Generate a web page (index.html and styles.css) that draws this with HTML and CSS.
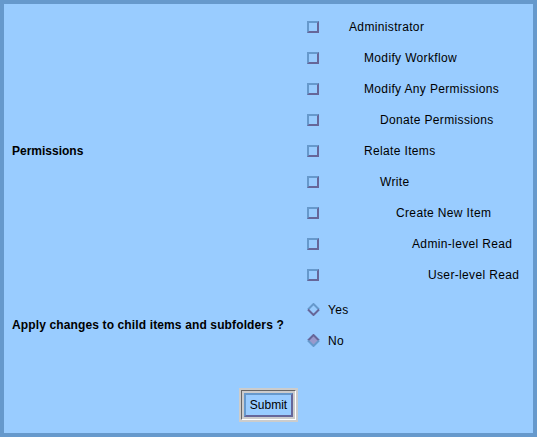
FILE: index.html
```html
<!DOCTYPE html>
<html>
<head>
<meta charset="utf-8">
<link rel="stylesheet" href="styles.css">
</head>
<body>
<div class="frame">
  <form class="form">
    <div class="section">
      <div class="label">Permissions</div>
      <div class="controls">
        <label class="row"><span class="check"></span><span class="text l0">Administrator</span></label>
        <label class="row"><span class="check"></span><span class="text l1">Modify Workflow</span></label>
        <label class="row"><span class="check"></span><span class="text l1">Modify Any Permissions</span></label>
        <label class="row"><span class="check"></span><span class="text l2">Donate Permissions</span></label>
        <label class="row"><span class="check"></span><span class="text l1">Relate Items</span></label>
        <label class="row"><span class="check"></span><span class="text l2">Write</span></label>
        <label class="row"><span class="check"></span><span class="text l3">Create New Item</span></label>
        <label class="row"><span class="check"></span><span class="text l4">Admin-level Read</span></label>
        <label class="row"><span class="check"></span><span class="text l5">User-level Read</span></label>
      </div>
    </div>
    <div class="section second">
      <div class="label apply">Apply changes to child items and subfolders ?</div>
      <div class="controls">
        <label class="row"><svg class="radio" width="13" height="13" viewBox="0 0 13 13"><path d="M1 6.5 L6.5 1 L12 6.5" stroke="#6699CC" stroke-width="2" fill="none"/><path d="M1 6.5 L6.5 12 L12 6.5" stroke="#666699" stroke-width="2" fill="none"/></svg><span class="rtext">Yes</span></label>
        <label class="row"><svg class="radio" width="13" height="13" viewBox="0 0 13 13"><path d="M6.5 1 L12 6.5 L6.5 12 L1 6.5 Z" fill="#9999CC"/><path d="M1 6.5 L6.5 1 L12 6.5" stroke="#666699" stroke-width="2" fill="none"/><path d="M1 6.5 L6.5 12 L12 6.5" stroke="#6699CC" stroke-width="2" fill="none"/></svg><span class="rtext">No</span></label>
      </div>
    </div>
    <div class="actions">
      <div class="btnwrap"><div class="etch"><button type="button" class="btn">Submit</button></div></div>
    </div>
  </form>
</div>
</body>
</html>
```
FILE: styles.css
```css
html, body {
  margin: 0;
  padding: 0;
}
body {
  font-family: "Liberation Sans", Arial, sans-serif;
  font-size: 12px;
  color: #000;
}
.frame {
  width: 537px;
  height: 437px;
  box-sizing: border-box;
  border: 4px solid #6699CC;
  background: #99CCFF;
}
.form {
  padding: 7px 0 0 8px;
  margin: 0;
}
.section {
  display: grid;
  grid-template-columns: 295px 1fr;
  align-items: center;
}
.second {
  margin-top: 4px;
}
.label {
  font-weight: bold;
}
.apply {
  letter-spacing: 0.13px;
}
.controls {
  display: flex;
  flex-direction: column;
}
.row {
  height: 31px;
  display: flex;
  align-items: center;
}
.check {
  width: 12px;
  height: 12px;
  box-sizing: border-box;
  border-style: solid;
  border-width: 2px;
  border-color: #6699CC #666699 #666699 #6699CC;
  background: #99CCFF;
  flex: none;
}
.text {
  margin-left: 30px;
  letter-spacing: 0.35px;
}
.l1 { margin-left: 45px; }
.l2 { margin-left: 61px; }
.l3 { margin-left: 77px; }
.l4 { margin-left: 93px; }
.l5 { margin-left: 109px; }
.radio {
  flex: none;
}
.rtext {
  margin-left: 8px;
  letter-spacing: 0.35px;
}
.actions {
  display: flex;
  justify-content: center;
  margin-top: 32px;
  margin-left: -8px;
}
.btnwrap {
  background: #CCCCCC;
  padding: 2px;
}
.etch {
  border-style: solid;
  border-width: 1px;
  border-color: #666666 #FFFFFF #FFFFFF #666666;
  padding: 2px;
}
.btn {
  display: block;
  font-family: "Liberation Sans", Arial, sans-serif;
  font-size: 12px;
  color: #000;
  background: #99CCFF;
  border-style: solid;
  border-width: 2px;
  border-color: #6699CC #666699 #666699 #6699CC;
  padding: 3px 4px 3px 4px;
  margin: 0;
  line-height: 14px;
}
```
